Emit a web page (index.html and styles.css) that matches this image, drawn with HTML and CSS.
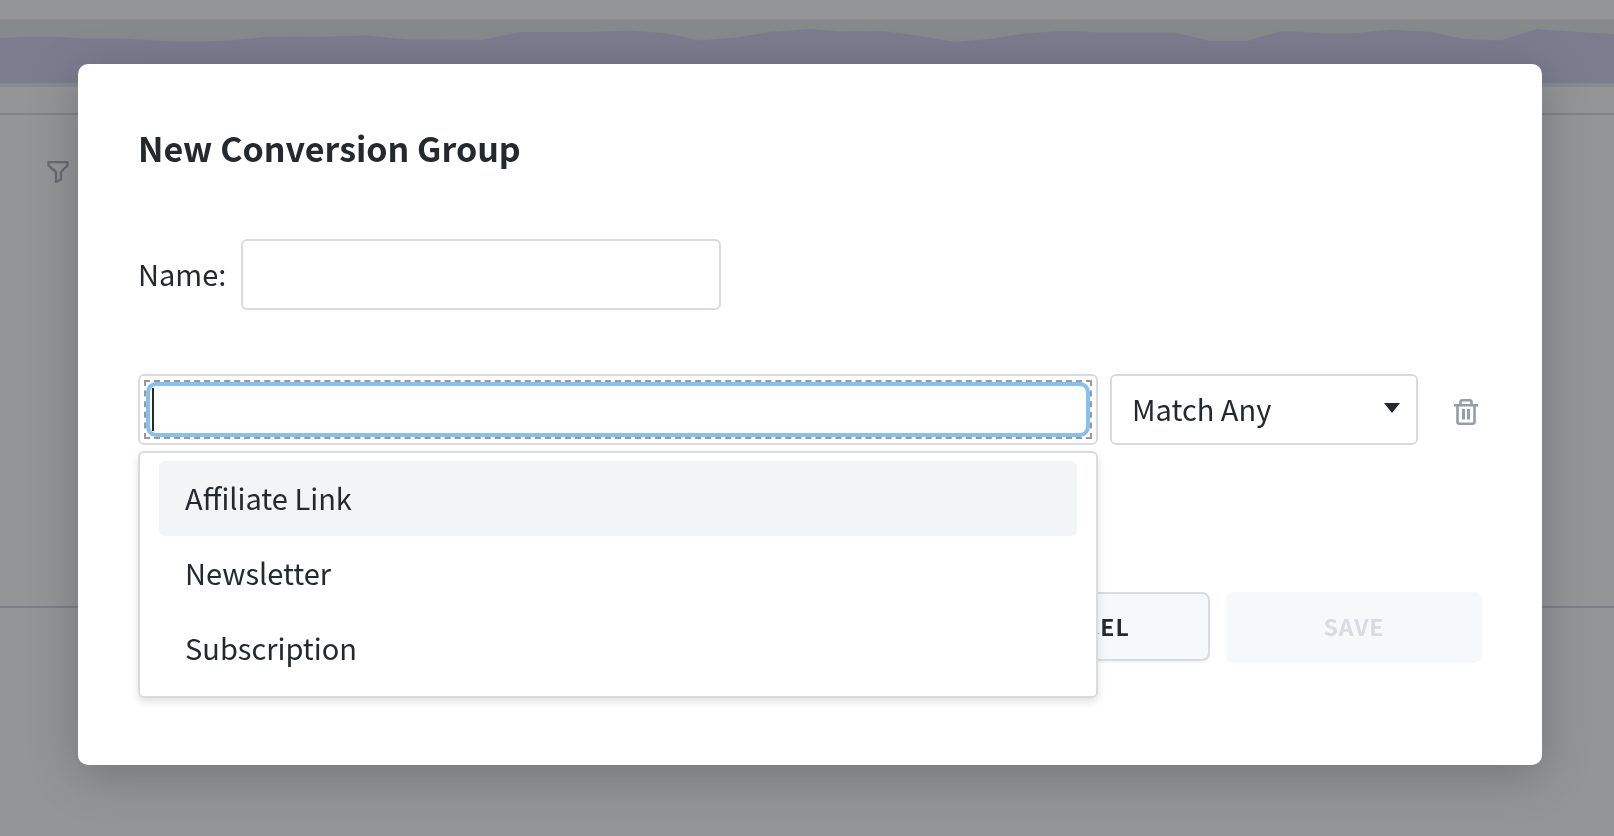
FILE: index.html
```html
<!DOCTYPE html>
<html lang="en">
<head>
    <meta charset="UTF-8">
    <meta name="viewport" content="width=device-width, initial-scale=1.0">
    <title>New Conversion Group</title>
    <link rel="stylesheet" href="styles.css">
</head>
<body>
    <!-- Dashboard behind the dialog -->
    <div class="page">
        <div class="chart">
            <svg class="chart-area" viewBox="0 0 1614 62" preserveAspectRatio="none" aria-hidden="true">
                <path fill="#7b7d8f" d="M0 17L20 16L45 15.500L62 16L83 17.500H125L155 19.500L175 20.500H205L230 19.500L265 16L325 15.500L368 14.500L407 18.500L482 19L520 11L590 11L627 9.500L665 12L700 19.500L737 16.500L770 11L810 8L840 10.500L883 10L920 15L955 21L990 18L1025 12.500L1060 10L1070 10L1100 11.500H1175L1210 20L1246 20L1282 10L1320 12H1357L1392 8.500L1430 11L1465 18L1501 19.500L1537 8L1570 10.500L1614 13V62H0Z"/>
            </svg>
        </div>
        <div class="panel">
            <svg class="filter-icon" viewBox="0 0 22 22" aria-hidden="true">
                <path d="M1.500 1H20.500V4.500L14 11V18.500L9 21V11L1.500 4.500Z"/>
            </svg>
        </div>
        <div class="footer-panel"></div>
    </div>

    <div class="overlay">
        <form class="modal" role="dialog" aria-labelledby="title">
            <h2 class="modal-title" id="title">New Conversion Group</h2>

            <div class="name-row">
                <label class="name-label" for="name">Name:</label>
                <input class="text-input" type="text" id="name">
            </div>

            <div class="rule-row">
                <div class="picker">
                    <div class="picker-box">
                        <div class="picker-focus">
                            <input class="picker-input" type="text" id="conversion" aria-label="Conversion">
                            <span class="caret"></span>
                        </div>
                    </div>
                    <ul class="options" role="listbox">
                        <li class="option active" role="option" aria-selected="true">Affiliate Link</li>
                        <li class="option" role="option">Newsletter</li>
                        <li class="option" role="option">Subscription</li>
                    </ul>
                </div>
                <div class="select-wrap">
                    <select class="select" id="match" aria-label="Match type">
                        <option>Match Any</option>
                        <option>Match All</option>
                    </select>
                </div>
                <button class="delete-button" type="button" aria-label="Delete">
                    <svg viewBox="0 0 24 26" width="24" height="26" aria-hidden="true">
                        <path d="M0 6.300H24M6.500 6V3.300Q6.500 1.300 8.500 1.300H15.500Q17.500 1.300 17.500 3.300V6M3.500 6V22.700Q3.500 24.700 5.500 24.700H18.500Q20.500 24.700 20.500 22.700V6"/>
                        <path class="bars" d="M9.500 10V20.500M14.500 10V20.500"/>
                    </svg>
                </button>
            </div>

            <div class="actions">
                <button class="button" type="button">CANCEL</button>
                <button class="button save" type="submit" disabled>SAVE</button>
            </div>
        </form>
    </div>
</body>
</html>
```

FILE: styles.css
```css
* {
    box-sizing: border-box;
}

body {
    margin: 0;
    min-height: 100vh;
    overflow: hidden;
    background-color: #949596;
    color: #24292e;
    font-family: 'Noto Sans CJK SC', 'Noto Sans', sans-serif;
    font-size: 29px;
    line-height: 44px;
}

input, select, button {
    font-family: inherit;
    font-size: inherit;
    color: inherit;
}

/* Dimmed dashboard */
.page {
    padding-top: 19px;
}

.chart {
    background-color: #868a8d;
    border-top: 2px solid #8b8c95;
    border-bottom: 4px solid #888a92;
}

.chart-area {
    display: block;
    width: 100%;
    height: 62px;
}

.panel {
    height: 493px;
    margin-top: 26px;
    padding: 46px 47px;
    border-top: 2px solid #808286;
}

.footer-panel {
    border-top: 2px solid #808188;
}

.filter-icon {
    display: block;
    width: 22px;
    height: 22px;
    fill: none;
    stroke: #686b72;
    stroke-width: 2.4;
    stroke-linejoin: round;
}

/* Dialog */
.overlay {
    position: fixed;
    inset: 0;
    padding: 64px 72px 64px 78px;
}

.modal {
    padding: 60px 60px 102px;
    background-color: #fff;
    border-radius: 10px;
    box-shadow: 0 10px 50px rgba(0, 0, 0, 0.22);
}

.modal-title {
    margin: 0 0 67px;
    font-size: 34px;
    font-weight: 600;
    line-height: 48px;
}

.name-row {
    display: flex;
    align-items: center;
    gap: 15px;
    margin-bottom: 64px;
}

.name-label {
    padding-bottom: 4px;
}

.text-input {
    width: 480px;
    height: 71px;
    padding: 0 20px;
    border: 2px solid #d8dbe0;
    border-radius: 6px;
    background-color: #fff;
}

.rule-row {
    display: flex;
    align-items: center;
    gap: 12px;
}

.picker {
    position: relative;
    flex: 1;
}

.picker-box {
    padding: 4px;
    border: 2px solid #d8dbe0;
    border-radius: 6px;
}

.picker-focus {
    position: relative;
    border: 2px dashed #999;
}

.picker-input {
    display: block;
    width: 100%;
    height: 55px;
    padding: 0 8px;
    border: 4px solid #85c0f0;
    border-radius: 10px;
    outline: none;
}

.caret {
    position: absolute;
    top: 6px;
    left: 6px;
    width: 2px;
    height: 43px;
    background-color: #24292e;
}

.options {
    position: absolute;
    top: 100%;
    left: 0;
    right: 0;
    z-index: 1;
    margin: 6px 0 0;
    padding: 8px 19px 10px;
    list-style: none;
    background-color: #fff;
    border: 2px solid #d8dbe0;
    border-radius: 6px;
    box-shadow: 0 4px 8px rgba(0, 0, 0, 0.12);
}

.option {
    padding: 0 26px 2px;
    border-radius: 6px;
    line-height: 73px;
}

.option.active {
    background-color: #f3f4f6;
}

.select-wrap {
    position: relative;
    width: 308px;
}

.select {
    display: block;
    width: 100%;
    height: 71px;
    padding: 0 20px 4px;
    border: 2px solid #d8dbe0;
    border-radius: 6px;
    background-color: #fff;
    appearance: none;
}

/* Drop-down arrow */
.select-wrap::after {
    content: "";
    position: absolute;
    top: 29px;
    right: 18px;
    border: solid transparent;
    border-width: 10px 8px 0;
    border-top-color: #24292e;
    pointer-events: none;
}

.delete-button {
    display: flex;
    justify-content: center;
    width: 32px;
    margin-left: 20px;
    padding: 4px 0 0;
    border: none;
    background: none;
}

.delete-button svg {
    fill: none;
    stroke: #959da5;
    stroke-width: 2.6;
}

.delete-button .bars {
    stroke-width: 3;
}

/* Dialog buttons */
.actions {
    display: flex;
    justify-content: flex-end;
    align-items: flex-start;
    gap: 16px;
    margin-top: 147px;
}

.button {
    width: 256px;
    height: 69px;
    padding: 0 0 2px;
    border: 2px solid #d8dbe0;
    border-radius: 8px;
    background-color: #f6f8fa;
    box-shadow: 0 2px 0 #f6f6f7;
    font-size: 23px;
    font-weight: 600;
    letter-spacing: 1px;
}

.button.save {
    height: 71px;
    padding-bottom: 4px;
    border: none;
    box-shadow: none;
    color: #d8dbe0;
}
```
